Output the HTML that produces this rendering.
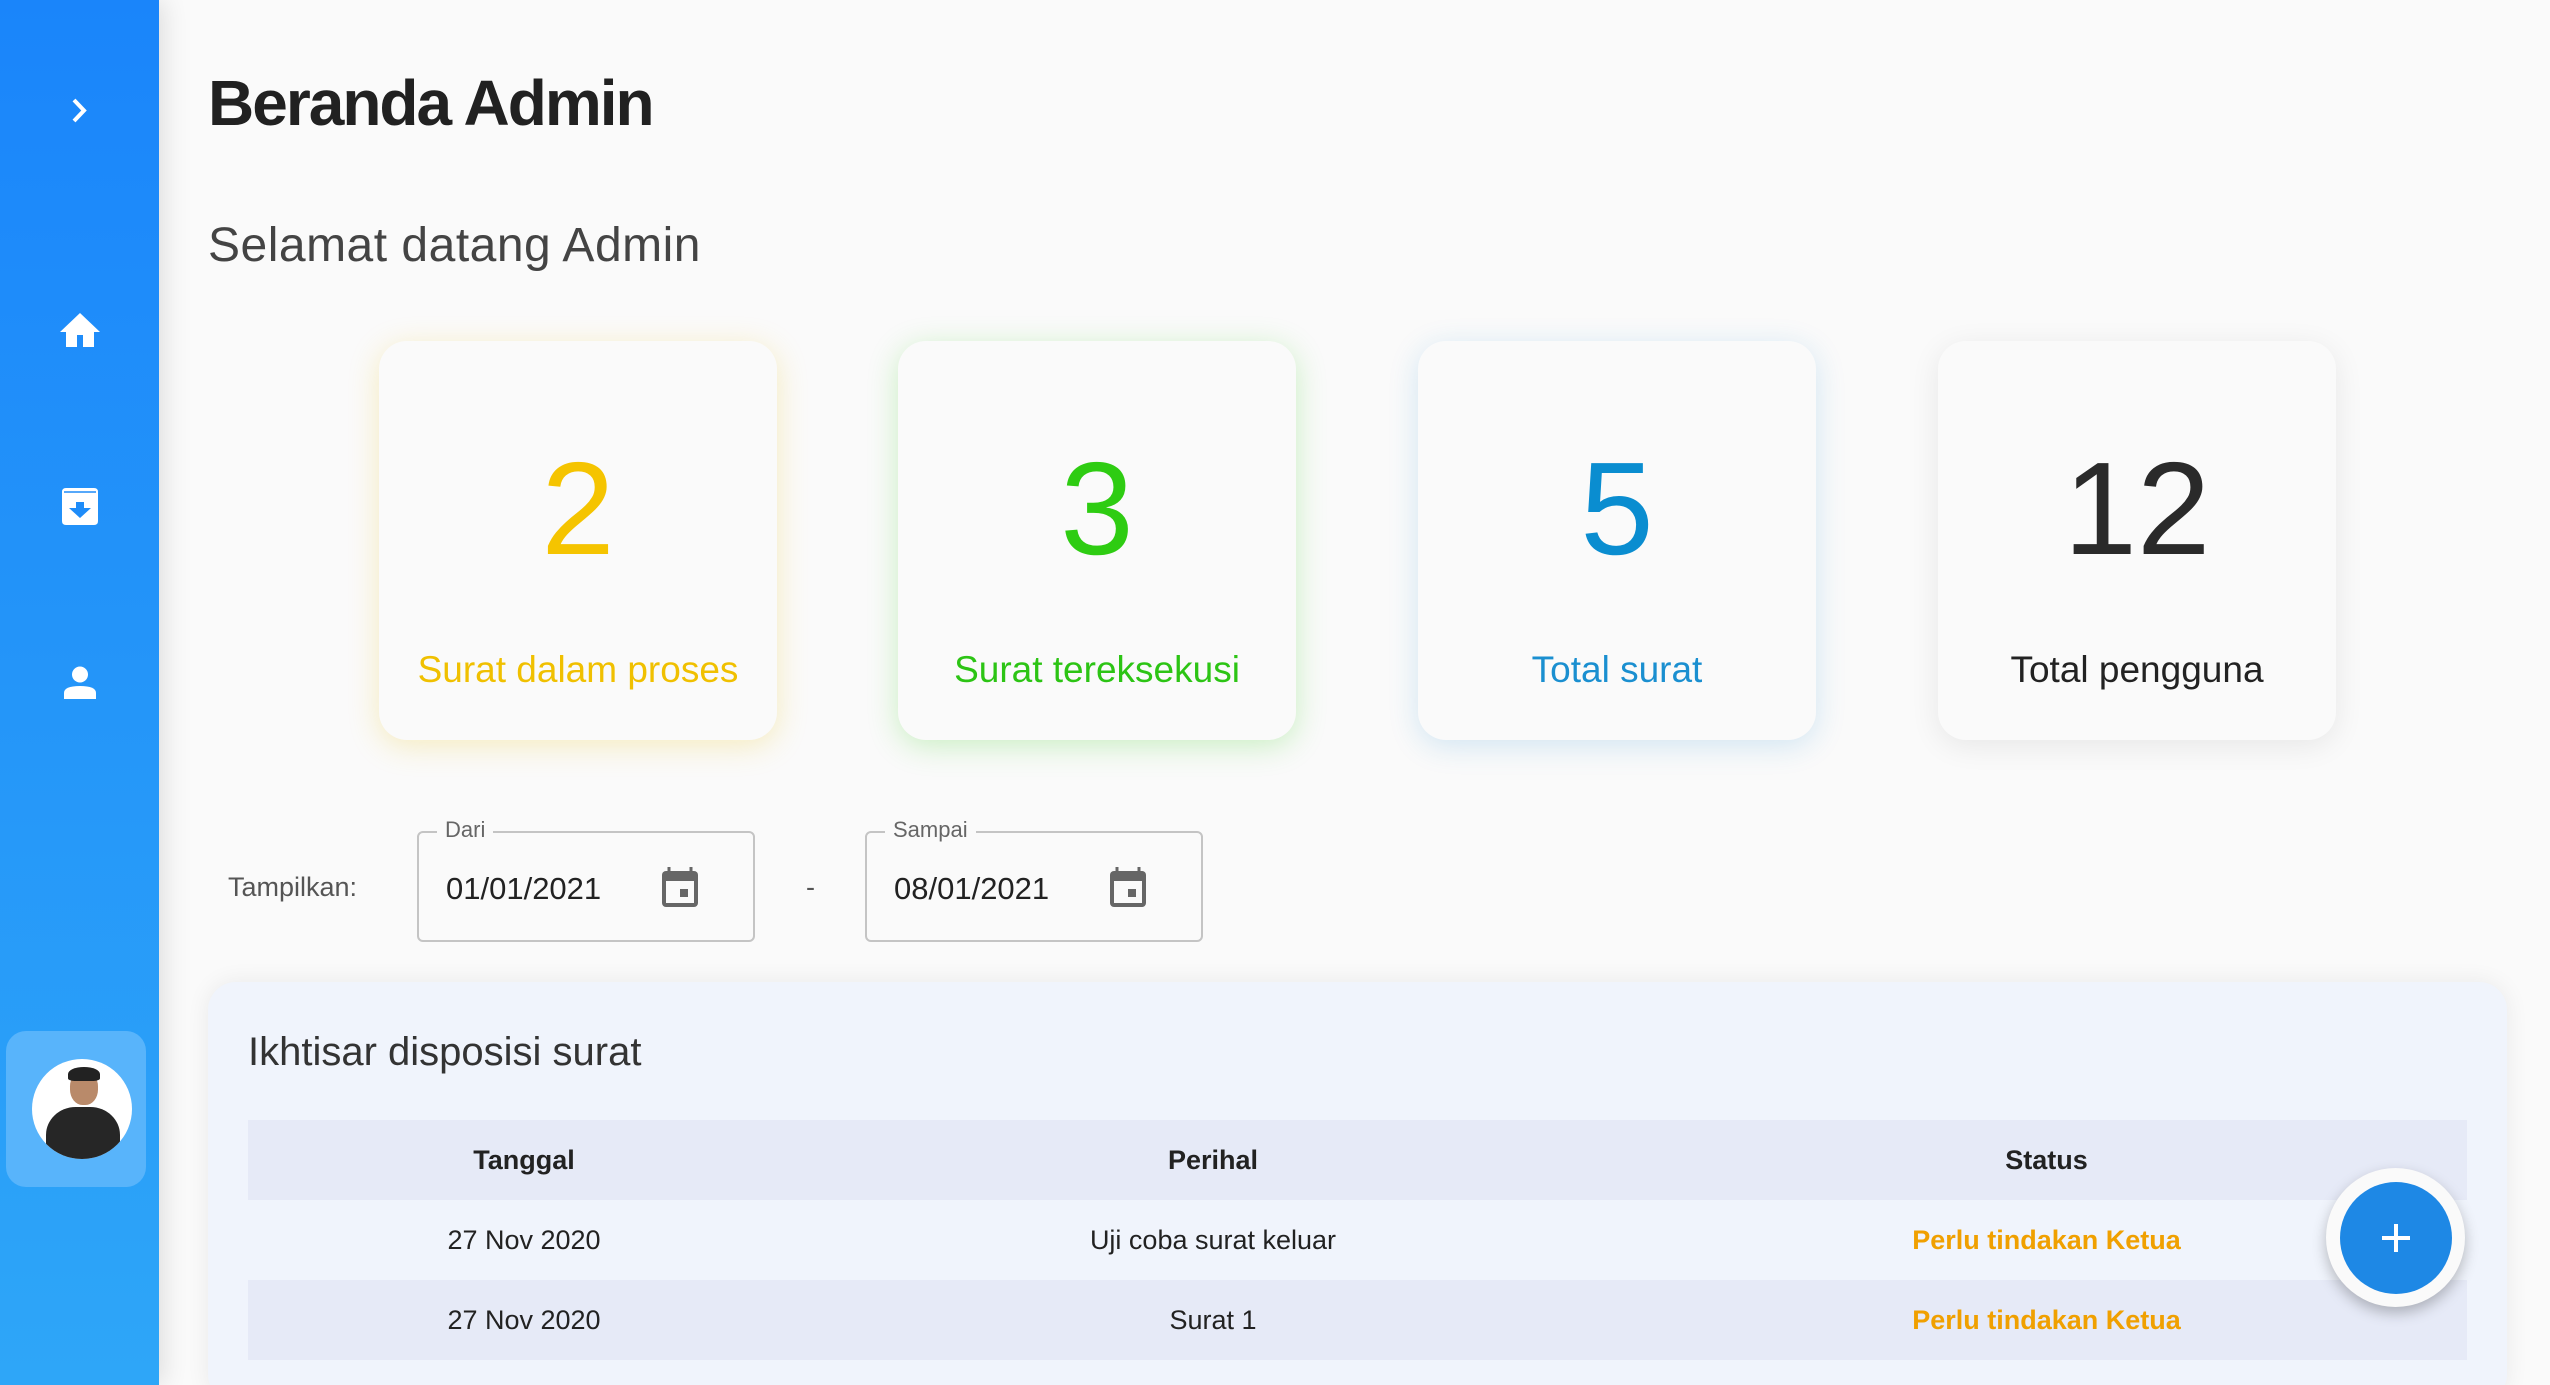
<!DOCTYPE html>
<html style="overflow:hidden;width:2550px;height:1385px"><head><meta charset="utf-8"><style>
*{margin:0;padding:0;box-sizing:border-box}
body{width:2550px;height:1385px;background:#fafafa;font-family:"Liberation Sans",sans-serif;position:relative;overflow:hidden}
.side{position:absolute;left:0;top:0;width:159px;height:1385px;background:linear-gradient(#1a85fa,#2ea6f8);box-shadow:4px 0 24px rgba(0,0,0,.12);z-index:2}
.abs{position:absolute}
.card{position:absolute;top:341px;width:398px;height:399px;border-radius:28px;background:#fafafa;text-align:center}
.card .n{position:absolute;left:0;right:0;top:102px;font-size:132px;line-height:1}
.card .l{position:absolute;left:0;right:0;top:308px;font-size:37px}
.field{position:absolute;top:831px;width:338px;height:111px;border:2px solid #c4c4c4;border-radius:6px}
.field .lab{position:absolute;left:18px;top:-16px;background:#fafafa;padding:0 8px;font-size:22px;color:#666}
.field .v{position:absolute;left:27px;top:38px;font-size:31px;color:#222}
.field svg{position:absolute;left:241px;top:32px}
.panel{position:absolute;left:208px;top:982px;width:2299px;height:420px;background:#f0f4fc;border-radius:28px;box-shadow:0 0 24px rgba(0,0,0,.07)}
table{position:absolute;left:40px;top:138px;width:2219px;border-collapse:collapse;font-size:27px;color:#222}
td,th{height:80px;text-align:center;padding:0}
th{font-weight:bold}
.h{background:#e6eaf7}
.o{color:#f0a000;font-weight:bold}
</style></head><body>
<div class="side">
<svg class="abs" style="left:70px;top:97px" width="20" height="28" viewBox="0 0 20 28"><path d="M4 3 L14 13.5 L4 24" fill="none" stroke="#fff" stroke-width="4"/></svg>
<svg class="abs" style="left:58px;top:310px" width="44" height="40" viewBox="0 0 44 40"><path d="M22 3 L2 22 H8 V37 H19 V25 H25 V37 H36 V22 H42 Z" fill="#fff"/></svg>
<svg class="abs" style="left:62px;top:488px" width="36" height="38" viewBox="0 0 36 38"><path d="M4 0 H32 Q36 0 36 4 V33 Q36 37 32 37 H4 Q0 37 0 33 V4 Q0 0 4 0Z" fill="#fff"/><path d="M2 4 H34" stroke="#1e8cf9" stroke-width="1.5"/><path d="M14 14 H22 V20 H29 L18 30 L7 20 H14Z" fill="#1e8cf9"/></svg>
<svg class="abs" style="left:63px;top:666px" width="34" height="34" viewBox="0 0 34 34"><circle cx="17" cy="8.5" r="8" fill="#fff"/><path d="M1 33 V27 Q1 20 17 20 Q33 20 33 27 V33Z" fill="#fff"/></svg>
<div class="abs" style="left:6px;top:1031px;width:140px;height:156px;background:#58b4fb;border-radius:20px"></div>
<div class="abs" style="left:32px;top:1059px;width:100px;height:100px;border-radius:50%;background:#fff;overflow:hidden">
<div class="abs" style="left:38px;top:12px;width:28px;height:34px;border-radius:45%;background:#b98a6a"></div>
<div class="abs" style="left:36px;top:8px;width:32px;height:14px;border-radius:50% 50% 20% 20%;background:#222"></div>
<div class="abs" style="left:14px;top:48px;width:74px;height:70px;border-radius:40% 40% 0 0;background:#262626"></div>
</div>
</div>
<div class="abs" style="left:208px;top:66px;font-size:64px;font-weight:bold;letter-spacing:-2px;color:#212121">Beranda Admin</div>
<div class="abs" style="left:208px;top:218px;font-size:48px;letter-spacing:0.5px;color:#444">Selamat datang Admin</div>
<div class="card" style="left:379px;box-shadow:0 6px 30px rgba(240,200,40,.28)"><div class="n" style="color:#f5c400">2</div><div class="l" style="color:#f0c000">Surat dalam proses</div></div>
<div class="card" style="left:898px;box-shadow:0 6px 30px rgba(60,210,30,.25)"><div class="n" style="color:#2ecc12">3</div><div class="l" style="color:#2cc414">Surat tereksekusi</div></div>
<div class="card" style="left:1418px;box-shadow:0 6px 30px rgba(30,140,210,.18)"><div class="n" style="color:#0a8dd0">5</div><div class="l" style="color:#1a8fd0">Total surat</div></div>
<div class="card" style="left:1938px;box-shadow:0 6px 30px rgba(0,0,0,.08)"><div class="n" style="color:#2a2a2a">12</div><div class="l" style="color:#222">Total pengguna</div></div>
<div class="abs" style="left:228px;top:872px;font-size:27px;color:#555">Tampilkan:</div>
<div class="field" style="left:417px"><div class="lab">Dari</div><div class="v">01/01/2021</div><svg width="40" height="44" viewBox="0 0 40 44"><path d="M9 2 V8 M31 2 V8" stroke="#666" stroke-width="3"/><rect x="2" y="6" width="36" height="36" rx="4" fill="#666"/><rect x="6" y="16" width="28" height="22" fill="#fafafa"/><rect x="20" y="24" width="8" height="8" fill="#666"/></svg></div>
<div class="abs" style="left:806px;top:872px;font-size:27px;color:#555">-</div>
<div class="field" style="left:865px"><div class="lab">Sampai</div><div class="v">08/01/2021</div><svg width="40" height="44" viewBox="0 0 40 44"><path d="M9 2 V8 M31 2 V8" stroke="#666" stroke-width="3"/><rect x="2" y="6" width="36" height="36" rx="4" fill="#666"/><rect x="6" y="16" width="28" height="22" fill="#fafafa"/><rect x="20" y="24" width="8" height="8" fill="#666"/></svg></div>
<div class="panel">
<div class="abs" style="left:40px;top:48px;font-size:40px;color:#333">Ikhtisar disposisi surat</div>
<table>
<tr class="h"><th style="width:552px">Tanggal</th><th style="width:826px">Perihal</th><th>Status</th></tr>
<tr><td>27 Nov 2020</td><td>Uji coba surat keluar</td><td class="o">Perlu tindakan Ketua</td></tr>
<tr class="h"><td>27 Nov 2020</td><td>Surat 1</td><td class="o">Perlu tindakan Ketua</td></tr>
</table>
</div>
<div class="abs" style="left:2326px;top:1168px;width:139px;height:139px;border-radius:50%;background:#fafafa;box-shadow:0 6px 14px rgba(0,0,0,.25)"></div>
<div class="abs" style="left:2340px;top:1182px;width:112px;height:112px;border-radius:50%;background:#1e88e5"></div>
<div class="abs" style="left:2382px;top:1236px;width:28px;height:4px;background:#fff"></div>
<div class="abs" style="left:2394px;top:1224px;width:4px;height:28px;background:#fff"></div>
</body></html>
